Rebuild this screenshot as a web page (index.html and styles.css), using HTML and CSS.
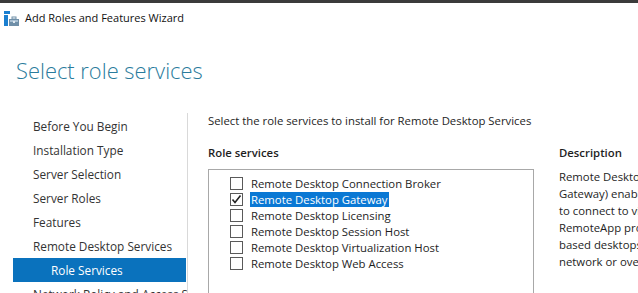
FILE: index.html
```html
<!DOCTYPE html>
<html>
<head>
<meta charset="utf-8">
<link rel="stylesheet" href="styles.css">
</head>
<body>
<div class="topstrip"></div>
<div class="titlebar">
  <svg class="appicon" width="16" height="16" viewBox="0 0 16 16">
    <rect x="0" y="0" width="6" height="3" fill="#1a7fd0"/>
    <rect x="0" y="4" width="4" height="11" fill="#1a7fd0"/>
    <rect x="5" y="8" width="10" height="7" fill="#6f8fa8"/>
    <rect x="6" y="9" width="8" height="2" fill="#a9c0d3"/>
    <rect x="8" y="6" width="4" height="2" fill="none" stroke="#6f8fa8" stroke-width="1"/>
    <rect x="9" y="10" width="2" height="2" fill="#dfe8ef"/>
  </svg>
  <span class="title">Add Roles and Features Wizard</span>
</div>
<h1 class="heading">Select role services</h1>
<div class="main">
  <nav class="nav">
    <div class="nav-item">Before You Begin</div>
    <div class="nav-item">Installation Type</div>
    <div class="nav-item">Server Selection</div>
    <div class="nav-item">Server Roles</div>
    <div class="nav-item">Features</div>
    <div class="nav-item">Remote Desktop Services</div>
    <div class="nav-item selected">Role Services</div>
    <div class="nav-item">Network Policy and Access Services</div>
  </nav>
  <section class="content">
    <div class="intro">Select the role services to install for Remote Desktop Services</div>
    <div class="columns">
      <div class="rolecol">
        <div class="label">Role services</div>
        <div class="listbox">
          <div class="row"><span class="cb"></span><span class="txt">Remote Desktop Connection Broker</span></div>
          <div class="row"><span class="cb"><svg width="11" height="11" viewBox="0 0 11 11"><path d="M1.5 5.5 L4 8.5 L9.5 1.5" fill="none" stroke="#222" stroke-width="1.6"/></svg></span><span class="txt hl">Remote Desktop Gateway</span></div>
          <div class="row"><span class="cb"></span><span class="txt">Remote Desktop Licensing</span></div>
          <div class="row"><span class="cb"></span><span class="txt">Remote Desktop Session Host</span></div>
          <div class="row"><span class="cb"></span><span class="txt">Remote Desktop Virtualization Host</span></div>
          <div class="row"><span class="cb"></span><span class="txt">Remote Desktop Web Access</span></div>
        </div>
      </div>
      <div class="desccol">
        <div class="label">Description</div>
        <div class="desc">
          <div class="line">Remote Desktop Gateway (RD</div>
          <div class="line">Gateway) enables authorized users</div>
          <div class="line">to connect to virtual desktops,</div>
          <div class="line">RemoteApp programs, and session-</div>
          <div class="line">based desktops on the corporate</div>
          <div class="line">network or over the Internet.</div>
        </div>
      </div>
    </div>
  </section>
</div>
</body>
</html>
```
FILE: styles.css
```css
html, body {
  margin: 0;
  padding: 0;
}
body {
  width: 638px;
  height: 293px;
  overflow: hidden;
  background: #fff;
  font-family: "Open Sans", "Noto Sans", sans-serif;
  font-size: 11.35px;
  color: #1e1e1e;
}
.topstrip {
  height: 3px;
  background: #3b3b3b;
}
.titlebar {
  height: 28px;
  display: flex;
  align-items: center;
  padding-left: 4px;
  gap: 5px;
}
.appicon {
  display: block;
  margin-top: 3px;
}
.title {
  font-size: 11px;
  color: #111;
}
.heading {
  margin: 24px 0 0 16px;
  font-weight: 300;
  font-size: 21.9px;
  line-height: 31px;
  color: #2a7b9c;
}
.main {
  display: grid;
  grid-template-columns: 188px 1fr;
  margin-top: 27px;
}
.nav {
  border-right: 1px solid #d9d9d9;
  padding-top: 1px;
  height: 200px;
  font-size: 11.8px;
  overflow: hidden;
}
.nav-item {
  height: 24px;
  line-height: 24px;
  padding-left: 33px;
  white-space: nowrap;
  color: #333;
}
.nav-item.selected {
  background: #0a72bd;
  color: #fff;
  margin-left: 13px;
  padding-left: 38px;
  margin-right: 1px;
}
.content {
  padding-left: 20px;
}
.intro {
  height: 16px;
  line-height: 16px;
  white-space: nowrap;
}
.columns {
  display: flex;
  gap: 25px;
  margin-top: 16px;
}
.rolecol {
  width: 326px;
  flex: none;
}
.label {
  font-weight: 600;
  height: 16px;
  line-height: 16px;
  color: #1e1e1e;
}
.listbox {
  margin-top: 8px;
  border: 1px solid #a8a8a8;
  height: 140px;
  padding: 5px 0 0 21px;
}
.row {
  display: flex;
  align-items: center;
  height: 16px;
  gap: 7px;
  white-space: nowrap;
}
.cb {
  width: 11px;
  height: 11px;
  border: 1px solid #5a5a5a;
  display: flex;
  align-items: center;
  justify-content: center;
  flex: none;
}
.cb svg {
  display: block;
}
.txt {
  padding: 0 1px;
  line-height: 15px;
}
.txt.hl {
  background: #0a78d4;
  color: #fff;
}
.desccol {
  white-space: nowrap;
}
.desc {
  margin-top: 7px;
}
.line {
  height: 17px;
  line-height: 17px;
}
```
